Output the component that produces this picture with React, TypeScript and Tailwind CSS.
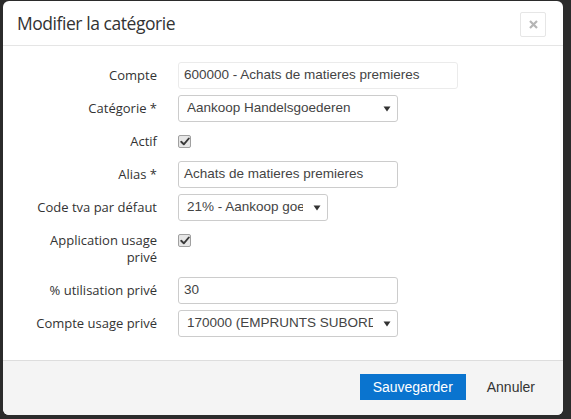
import React from "react";

function Check() {
  return (
    <div className="w-[13px] h-[13px] rounded-[2px] border border-[#a0a0a0] bg-[#e6e6e6] flex items-center justify-center">
      <svg width="10" height="9" viewBox="0 0 10 9">
        <path d="M1.2 4.8 L3.8 7.3 L8.8 1.5" fill="none" stroke="#3a3a3a" strokeWidth="1.9" strokeLinecap="round" strokeLinejoin="round" />
      </svg>
    </div>
  );
}

function Select({ text, w }: { text: string; w: string }) {
  return (
    <div className={`${w} h-[27px] border border-[#cccccc] rounded-[3px] bg-white flex items-center pl-[8px] pr-[6px]`}>
      <span className="flex-1 overflow-hidden whitespace-nowrap text-[13.5px] text-[#444]" style={{ fontFamily: "'Liberation Sans', Arial, sans-serif" }}>
        {text}
      </span>
      <svg width="8" height="6" viewBox="0 0 8 6" className="ml-[10px] shrink-0">
        <path d="M0.5 0.5 L7.5 0.5 L4 5.5 Z" fill="#333" />
      </svg>
    </div>
  );
}

function Input({ text, w, light }: { text: string; w: string; light?: boolean }) {
  return (
    <div
      className={`${w} h-[27px] border ${light ? "border-[#ebebeb]" : "border-[#cccccc]"} rounded-[3px] bg-white flex items-center pl-[5px] text-[13.5px] text-[#444] whitespace-nowrap overflow-hidden`}
      style={{ fontFamily: "'Liberation Sans', Arial, sans-serif" }}
    >
      {text}
    </div>
  );
}

function Row({ label, children }: { label: React.ReactNode; children: React.ReactNode }) {
  return (
    <div className="flex items-center h-[27px]">
      <div className="w-[154px] text-right text-[13px] text-[#333]">{label}</div>
      <div className="ml-[21px]">{children}</div>
    </div>
  );
}

export default function App() {
  return (
    <div className="w-[571px] h-[419px] bg-[#2b2b2b] pt-[1px] pl-[3px]" style={{ fontFamily: "'Open Sans', sans-serif" }}>
      <div className="w-[560px] h-[414px] bg-white rounded-[6px] overflow-hidden flex flex-col">
        <div className="h-[45px] border-b border-[#e5e5e5] flex items-center justify-between pl-[14px] pr-[17px] shrink-0">
          <h1 className="text-[17.5px] text-[#333] tracking-[-0.45px]">Modifier la catégorie</h1>
          <div className="w-[26px] h-[25px] border border-[#e6e6e6] rounded-[2px] flex items-center justify-center mt-[2px]">
            <svg width="9" height="9" viewBox="0 0 9 9">
              <path d="M1 1 L8 8 M8 1 L1 8" stroke="#b5b5b5" strokeWidth="2.2" />
            </svg>
          </div>
        </div>
        <div className="flex-1 pt-[16px] flex flex-col gap-[6px]">
          <Row label="Compte">
            <Input text="600000 - Achats de matieres premieres" w="w-[280px]" light />
          </Row>
          <Row label="Catégorie *">
            <Select text="Aankoop Handelsgoederen" w="w-[220px]" />
          </Row>
          <Row label="Actif">
            <Check />
          </Row>
          <Row label="Alias *">
            <Input text="Achats de matieres premieres" w="w-[220px]" />
          </Row>
          <Row label="Code tva par défaut">
            <Select text="21% - Aankoop goederen" w="w-[150px]" />
          </Row>
          <div className="flex h-[44px]">
            <div className="w-[154px] text-right text-[13px] text-[#333] leading-[17px] pt-[5px]">
              Application usage
              <br />
              privé
            </div>
            <div className="ml-[21px] pt-[7px]">
              <Check />
            </div>
          </div>
          <Row label="% utilisation privé">
            <Input text="30" w="w-[220px]" />
          </Row>
          <Row label="Compte usage privé">
            <Select text="170000 (EMPRUNTS SUBORDONNES)" w="w-[220px]" />
          </Row>
        </div>
        <div className="h-[55px] shrink-0 border-t border-[#dddddd] bg-[#f4f4f4] flex items-start justify-end pt-[13px] pr-[7px]" style={{ fontFamily: "'Liberation Sans', Arial, sans-serif" }}>
          <button className="w-[106px] h-[26px] bg-[#0a74cf] text-white text-[14px]">Sauvegarder</button>
          <button className="h-[26px] px-[21px] text-[#333] text-[14px]">Annuler</button>
        </div>
      </div>
    </div>
  );
}
